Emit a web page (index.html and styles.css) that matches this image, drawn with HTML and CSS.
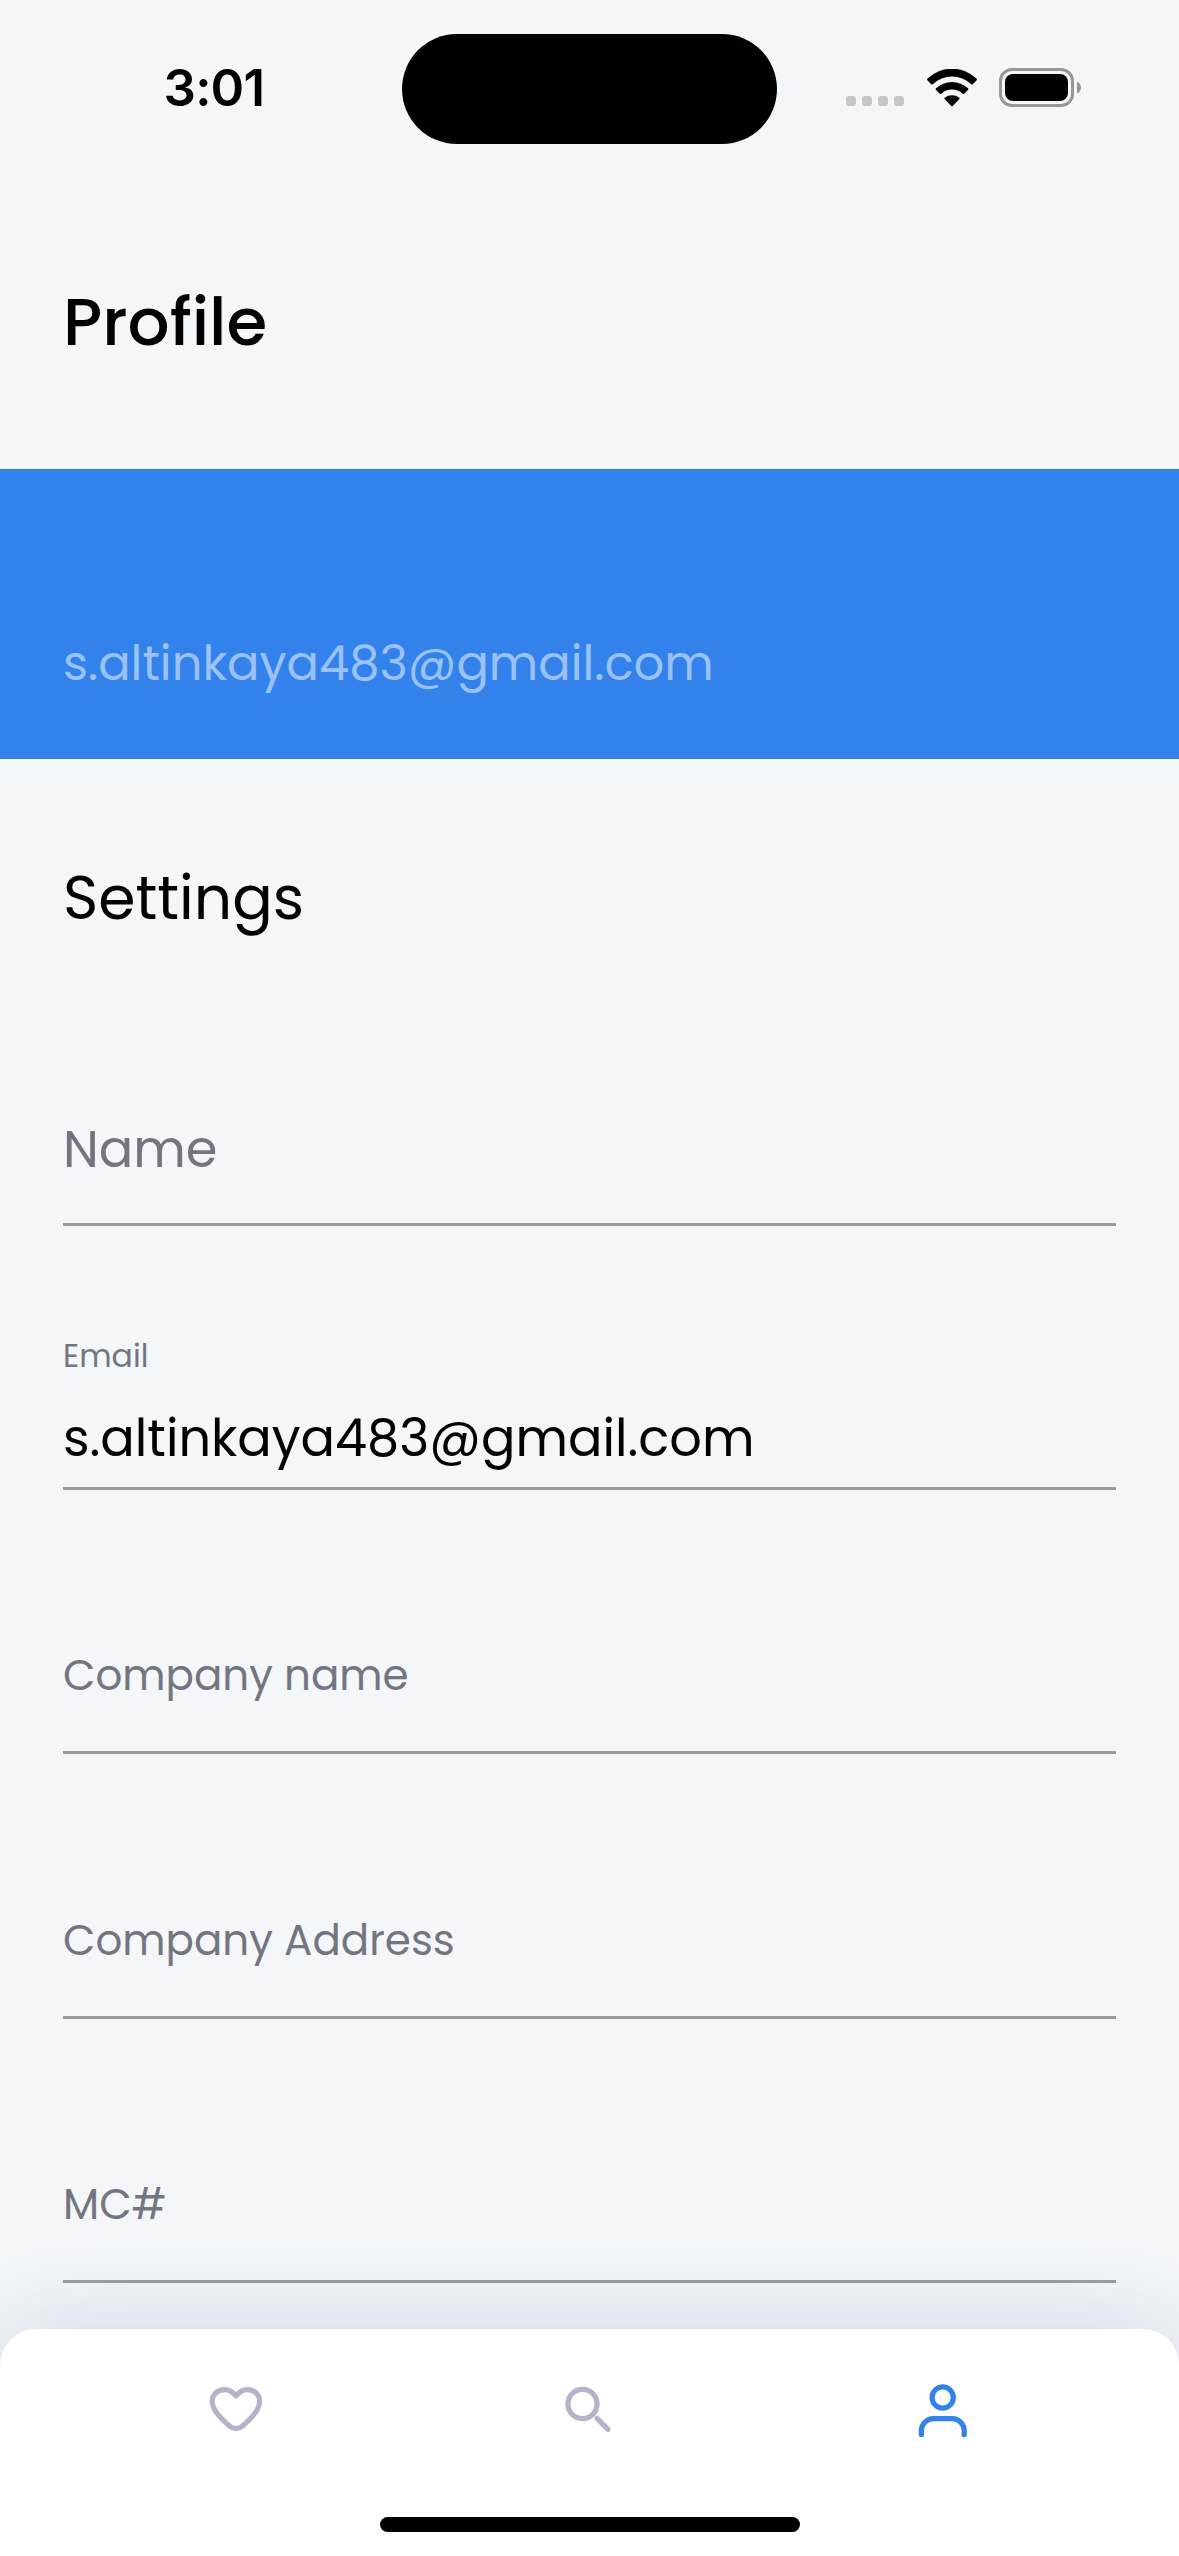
FILE: index.html
```html
<!DOCTYPE html>
<html lang="en">
<head>
<meta charset="utf-8">
<title>Profile</title>
<link rel="stylesheet" href="styles.css">
</head>
<body>
<div class="screen">
  <header class="status-bar">
    <div class="time">3:01</div>
    <div class="island"></div>
    <div class="indicators">
      <svg class="signal" width="58" height="10" viewBox="0 0 58 10"><rect width="10" height="10" rx="3"/><rect x="16" width="10" height="10" rx="3"/><rect x="32" width="10" height="10" rx="3"/><rect x="48" width="10" height="10" rx="3"/></svg>
      <svg class="wifi" width="50" height="38" viewBox="0 0 50 38"><path d="M0.600 11.600Q-0.400 10.600 0.600 9.600A35 35 0 0 1 49.400 9.600Q50.400 10.600 49.400 11.600L45.800 15.200Q45 16 44.200 15.200A27.500 27.500 0 0 0 5.800 15.200Q5 16 4.200 15.200Z"/><path d="M9 20.900Q8.200 20.100 9 19.300A23.500 23.500 0 0 1 41 19.300Q41.800 20.100 41 20.900L37.200 24.700Q36.500 25.400 35.700 24.700A15.800 15.800 0 0 0 14.300 24.700Q13.500 25.400 12.800 24.700Z"/><path d="M17.600 30.100Q17 29.400 17.700 28.800A12 12 0 0 1 32.300 28.800Q33 29.400 32.400 30.100L25.700 36.900Q25 37.600 24.300 36.900Z"/></svg>
      <svg class="battery" width="83" height="39" viewBox="0 0 83 39"><rect class="shell" x="1.500" y="1.500" width="72" height="36" rx="11.500"/><rect x="6" y="6" width="63" height="27" rx="8"/><path class="nub" d="M78 13.500Q82 15.500 82 19.500T78 25.500Z"/></svg>
    </div>
  </header>
  <h1 class="title">Profile</h1>
  <section class="account">s.altinkaya483@gmail.com</section>
  <main class="settings">
    <h2 class="section-title">Settings</h2>
    <div class="field field-name"><span class="placeholder">Name</span></div>
    <div class="field field-filled"><span class="label">Email</span><span class="value">s.altinkaya483@gmail.com</span></div>
    <div class="field"><span class="placeholder">Company name</span></div>
    <div class="field"><span class="placeholder">Company Address</span></div>
    <div class="field"><span class="placeholder">MC#</span></div>
  </main>
  <nav class="tab-bar">
    <div class="tabs">
      <a class="tab"><svg viewBox="0 0 72 72"><path d="M36 23C32.500 18.500 28.500 16.600 24.500 16.600C17.500 16.600 12.200 21.500 12.200 28.500C12.200 37 20.500 45.500 29.500 53C34 56.600 38 56.600 42.500 53C51.500 45.500 59.600 37 59.600 28.500C59.600 21.500 54.500 16.600 47.500 16.600C43.500 16.600 39.500 18.500 36 23Z"/></svg></a>
      <a class="tab"><svg viewBox="0 0 72 72"><circle cx="29.500" cy="31" r="14.600"/><path d="M44 45.300L55 56.400"/></svg></a>
      <a class="tab active"><svg viewBox="0 0 72 72"><circle cx="35.700" cy="24.500" r="10.600"/><path d="M14.400 61.400V57.600A12 12 0 0 1 26.400 45.600H45.200A12 12 0 0 1 57.200 57.600V61.400"/></svg></a>
    </div>
    <div class="home-indicator"></div>
  </nav>
</div>
</body>
</html>
```
FILE: styles.css
```css
* { box-sizing: border-box; }
body { margin: 0; background: #f3f7fa; }
.screen {
  position: relative;
  width: 1179px;
  height: 2556px;
  overflow: hidden;
  background: #f3f7fa;
  color: #000;
  font-family: Poppins, Inter, "Open Sans", sans-serif;
}
.status-bar {
  display: grid;
  grid-template-columns: 402px 375px 1fr;
  height: 177px;
  padding-top: 33.500px;
}
.time {
  padding: 24px 0 0 163.500px;
  font: 600 51px/60px Inter, sans-serif;
  letter-spacing: -0.800px;
}
.island { height: 110.800px; border-radius: 56px; background: #000; }
.indicators { display: flex; align-items: flex-start; padding: 34.500px 0 0 69px; }
.signal { margin-top: 28px; fill: #c4c8ca; }
.wifi { margin: 1px 22px 0 22.500px; }
.shell { fill: none; stroke: #959799; stroke-width: 3; }
.nub { fill: #959799; }
.title {
  height: 292px;
  margin: 0;
  padding: 97px 0 0 63px;
  font-size: 66px;
  font-weight: 500;
  line-height: 96px;
}
.account {
  height: 290px;
  padding: 159px 0 0 63px;
  background: #3381eb;
  color: #99c2f8;
  font-size: 48px;
  line-height: 72px;
}
.settings { padding: 97px 63px 0; }
.section-title {
  margin: 0 0 21.400px;
  font-size: 60px;
  font-weight: 400;
  line-height: 84px;
}
.field {
  display: flex;
  flex-direction: column;
  justify-content: flex-end;
  height: 264.300px;
  padding-bottom: 45px;
  border-bottom: 3px solid #989c9f;
  color: #757582;
}
.placeholder { font-size: 42px; line-height: 60px; }
.field-name { padding-bottom: 38px; }
.field-name .placeholder { font-size: 51px; line-height: 72px; }
.field-filled { gap: 24px; padding-bottom: 13px; }
.label { font-size: 31.500px; line-height: 44px; }
.value { color: #000; font-size: 51px; line-height: 72px; }
.tab-bar {
  position: absolute;
  inset: 2329px 0 0;
  display: flex;
  flex-direction: column;
  align-items: center;
  justify-content: space-between;
  padding: 44px 59px 24px;
  border-radius: 36px 36px 0 0;
  background: #fff;
  box-shadow: 0 0 100px rgba(65, 95, 140, 0.220);
}
.tabs { display: grid; grid-template-columns: repeat(3, 1fr); width: 100%; }
.tab { display: flex; justify-content: center; color: #b3b3ca; }
.tab svg {
  width: 72px;
  height: 72px;
  fill: none;
  stroke: currentColor;
  stroke-width: 5.200;
  stroke-linecap: round;
  stroke-linejoin: round;
}
.active { color: #3381eb; }
.home-indicator { width: 420px; height: 15px; border-radius: 8px; background: #000; }
```
